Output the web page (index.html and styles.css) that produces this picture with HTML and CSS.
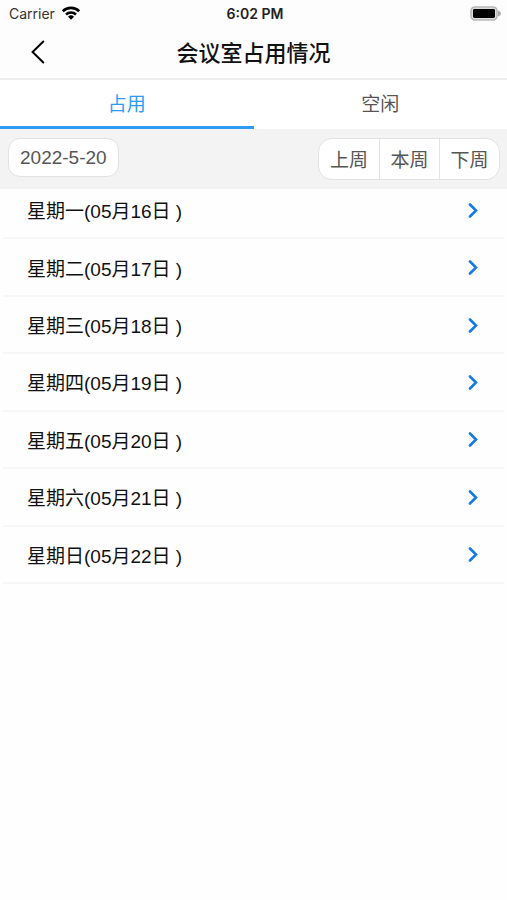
FILE: index.html
```html
<!DOCTYPE html>
<html lang="zh-CN">
<head>
<meta charset="utf-8">
<meta name="viewport" content="width=device-width, initial-scale=1">
<title>会议室占用情况</title>
<link rel="stylesheet" href="styles.css">
</head>
<body>
<header class="header">
  <div class="status">
    <div class="carrier">
      <span>Carrier</span>
      <svg width="20" height="16" viewBox="0 0 20 16" fill="none" stroke="#000" stroke-width="2.6" aria-hidden="true">
        <path d="M1.8 6.2a11.8 11.8 0 0 1 16.4 0"/>
        <path d="M5 9.5a7.2 7.2 0 0 1 10 0"/>
        <path d="M10 14.8L7 11.8a4.3 4.3 0 0 1 6 0z" fill="#000" stroke="none"/>
      </svg>
    </div>
    <span class="time">6:02 PM</span>
    <svg class="battery" width="31" height="15" viewBox="0 0 31 15" aria-hidden="true">
      <rect x="1" y="1" width="26" height="13" rx="4" fill="#dcdcdc" stroke="#b8b8b8" stroke-width="1.6"/>
      <rect x="3" y="3" width="22" height="9" rx="1.4" fill="#000"/>
      <path d="M28 4.5q3 1.2 3 3T28 10.500z" fill="#aaa"/>
    </svg>
  </div>
  <div class="navbar">
    <button class="back" type="button" aria-label="返回">
      <svg width="14" height="24" viewBox="0 0 14 24" fill="none" stroke="#000" stroke-width="2" stroke-linecap="round" aria-hidden="true"><path d="M12.3 1.5L1.6 12l10.7 10.5"/></svg>
    </button>
    <h1 class="title">会议室占用情况</h1>
  </div>
</header>
<nav class="tabs">
  <button class="tab active" type="button">占用</button>
  <button class="tab" type="button">空闲</button>
</nav>
<div class="toolbar">
  <button class="date" type="button">2022-5-20</button>
  <div class="weeks">
    <button class="week" type="button">上周</button>
    <button class="week" type="button">本周</button>
    <button class="week" type="button">下周</button>
  </div>
</div>
<main class="days">
  <a class="day" href="#d16"><span>星期一(05月16日 )</span><svg class="chevron" viewBox="0 0 10 16" aria-hidden="true"><path d="M2 2.500L8 8.500l-6 6"/></svg></a>
  <a class="day" href="#d17"><span>星期二(05月17日 )</span><svg class="chevron" viewBox="0 0 10 16" aria-hidden="true"><path d="M2 2.500L8 8.500l-6 6"/></svg></a>
  <a class="day" href="#d18"><span>星期三(05月18日 )</span><svg class="chevron" viewBox="0 0 10 16" aria-hidden="true"><path d="M2 2.500L8 8.500l-6 6"/></svg></a>
  <a class="day" href="#d19"><span>星期四(05月19日 )</span><svg class="chevron" viewBox="0 0 10 16" aria-hidden="true"><path d="M2 2.500L8 8.500l-6 6"/></svg></a>
  <a class="day" href="#d20"><span>星期五(05月20日 )</span><svg class="chevron" viewBox="0 0 10 16" aria-hidden="true"><path d="M2 2.500L8 8.500l-6 6"/></svg></a>
  <a class="day" href="#d21"><span>星期六(05月21日 )</span><svg class="chevron" viewBox="0 0 10 16" aria-hidden="true"><path d="M2 2.500L8 8.500l-6 6"/></svg></a>
  <a class="day" href="#d22"><span>星期日(05月22日 )</span><svg class="chevron" viewBox="0 0 10 16" aria-hidden="true"><path d="M2 2.500L8 8.500l-6 6"/></svg></a>
</main>
</body>
</html>
```
FILE: styles.css
```css
* {
  box-sizing: border-box;
}

body {
  margin: 0;
  background: #fefefe;
  color: #111;
  font-family: "Liberation Sans", "Noto Sans CJK SC", sans-serif;
  font-size: 19px;
}

button {
  margin: 0;
  padding: 0;
  border: 0;
  background: none;
  color: inherit;
  font: inherit;
}

.header {
  background: #fdfdfd;
  border-bottom: 2px solid #eee;
}

.status {
  display: grid;
  grid-template-columns: 1fr auto 1fr;
  align-items: center;
  height: 26px;
  padding: 0 6px 0 9px;
  font-family: Inter, "Liberation Sans", sans-serif;
  font-size: 14px;
}

.carrier {
  display: flex;
  align-items: center;
  gap: 6px;
  color: #333;
}

.time {
  color: #222;
  font-weight: 600;
}

.battery {
  justify-self: end;
}

.navbar {
  display: grid;
  grid-template-columns: 60px 1fr 60px;
  align-items: center;
  height: 52px;
}

.back {
  display: flex;
  height: 44px;
  align-items: center;
  padding-left: 31px;
}

.title {
  margin: 0;
  padding-top: 4px;
  color: #111;
  font-size: 22px;
  font-weight: 500;
  line-height: 32px;
  text-align: center;
}

.tabs {
  display: grid;
  grid-template-columns: 1fr 1fr;
  background: #fff;
}

.tab {
  height: 49px;
  padding-bottom: 2px;
  border-bottom: 3px solid transparent;
  color: #555;
}

.tab.active {
  border-color: #2d9cf0;
  color: #2d9cf0;
}

.toolbar {
  position: relative;
  display: flex;
  align-items: flex-start;
  justify-content: space-between;
  height: 60px;
  padding: 9px 7px 0 8px;
  background: #f3f3f3;
  color: #555;
}

.date {
  height: 39px;
  padding: 0 11px;
  border: 1px solid #e2e2e2;
  border-radius: 12px;
  background: #fff;
}

.weeks {
  display: flex;
  overflow: hidden;
  border: 1px solid #e2e2e2;
  border-radius: 14px;
  background: #fff;
}

.week {
  width: 60px;
  height: 40px;
  padding-bottom: 2px;
}

.week + .week {
  border-left: 1px solid #e2e2e2;
}

/* The first row slides slightly under the toolbar. */
.days {
  display: grid;
  grid-auto-rows: 1fr;
  min-height: 402px;
  margin: -7px 3px 0;
}

.day {
  display: flex;
  align-items: center;
  justify-content: space-between;
  padding: 0 26px 0 24px;
  border-bottom: 2px solid #f7f7f7;
  color: inherit;
  text-decoration: none;
}

.chevron {
  width: 10px;
  height: 16px;
  fill: none;
  stroke: #147ae6;
  stroke-width: 2.6;
  stroke-linecap: round;
}
```
